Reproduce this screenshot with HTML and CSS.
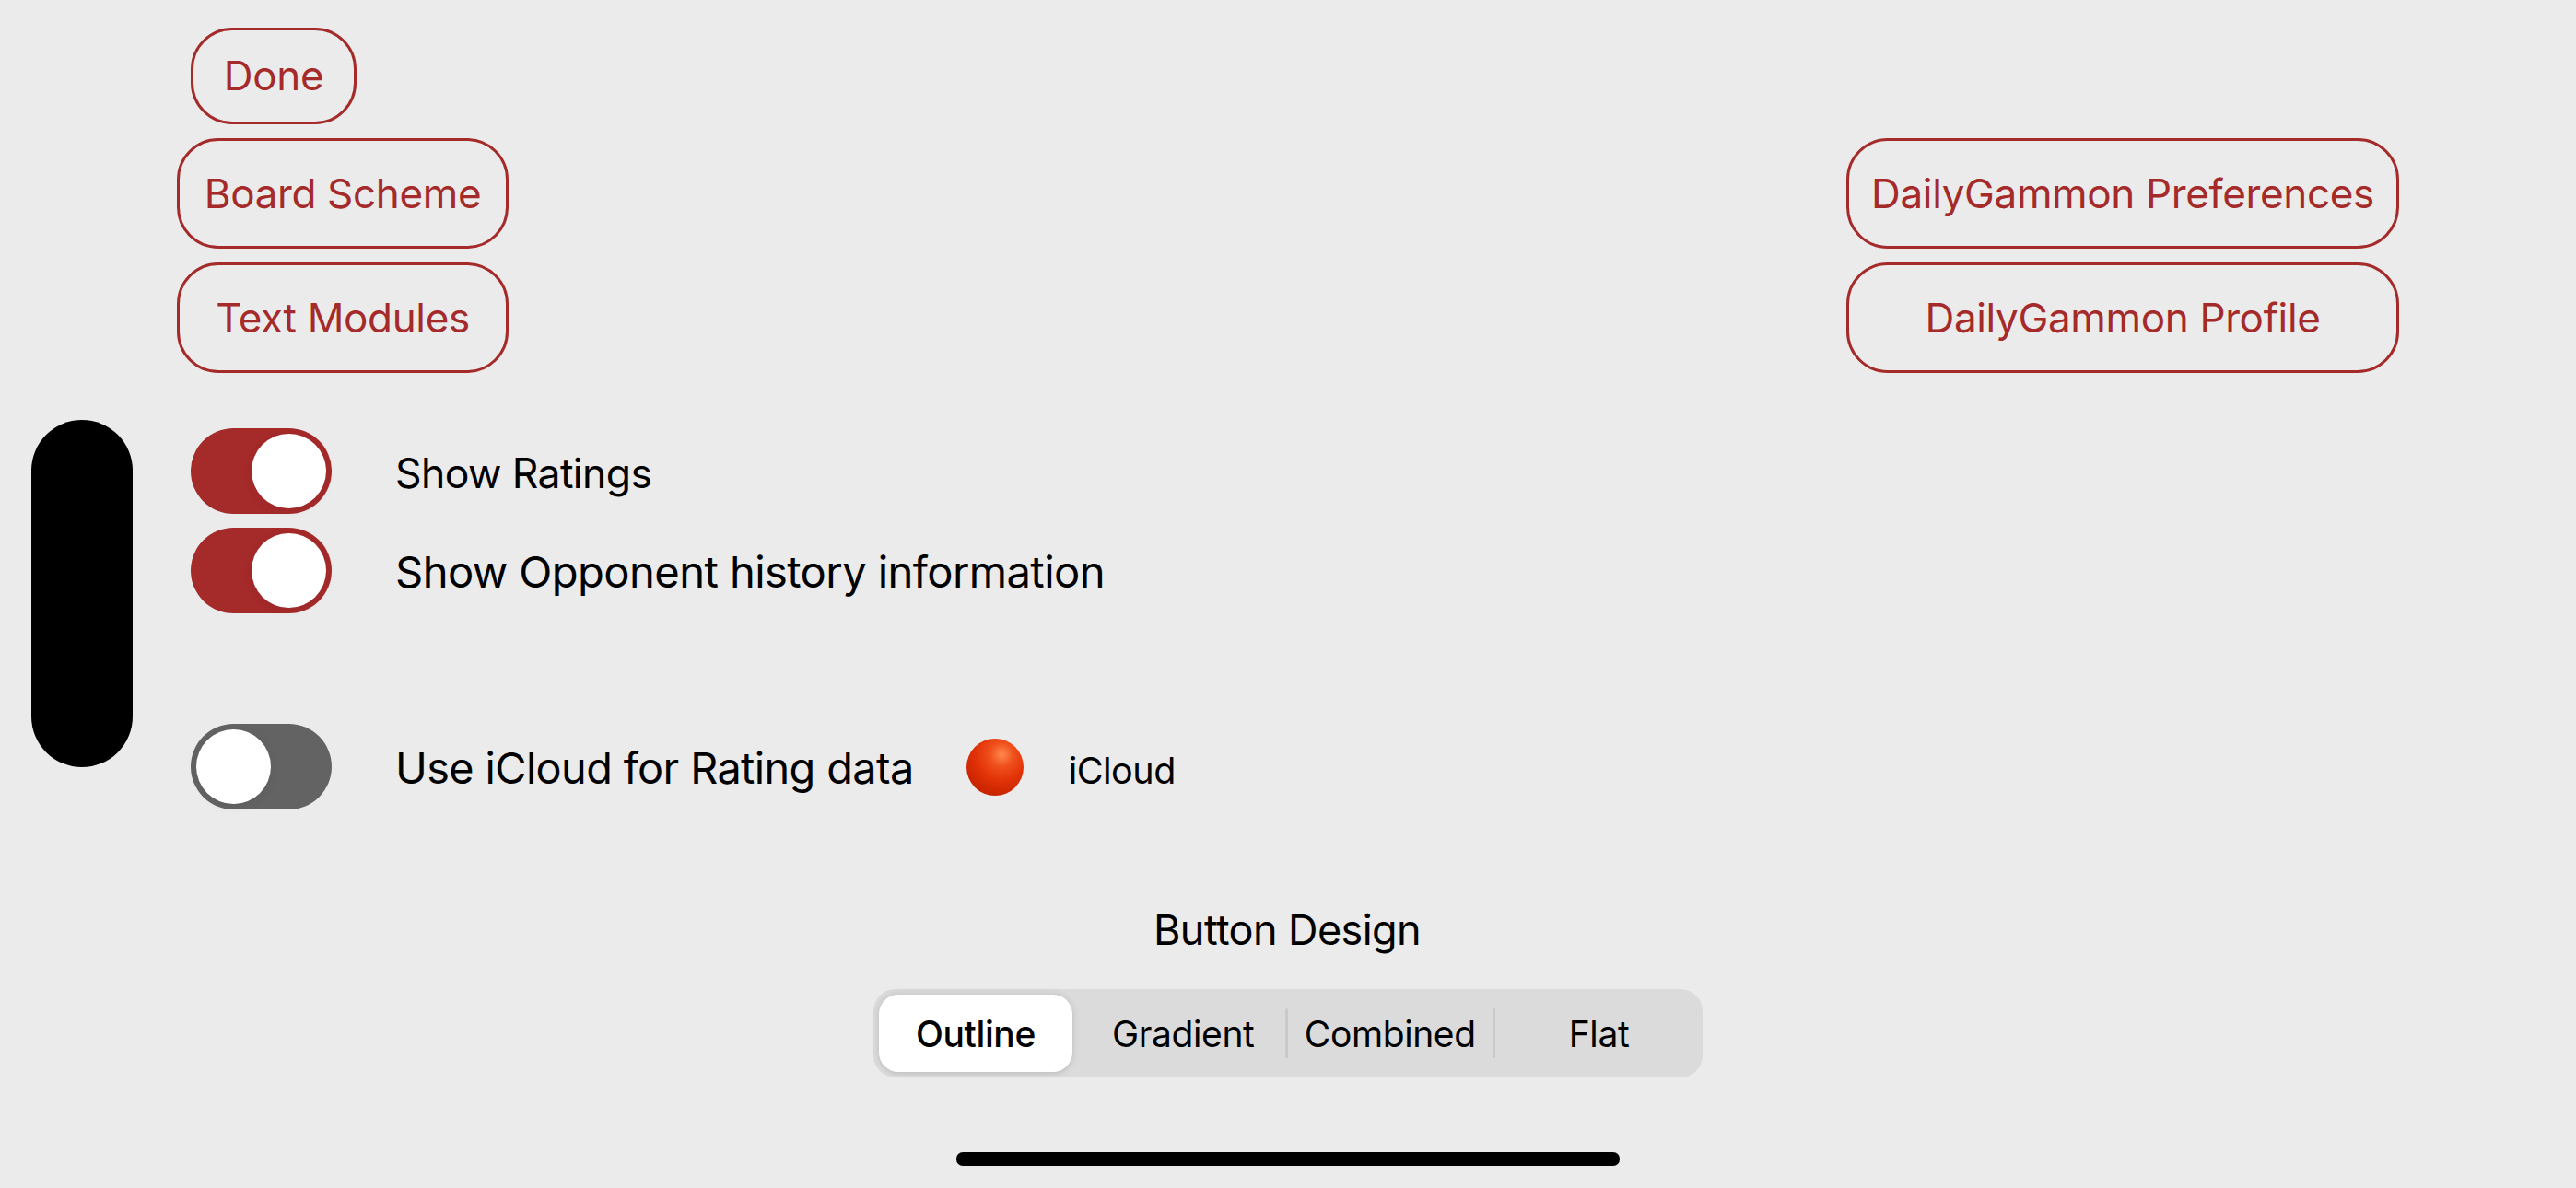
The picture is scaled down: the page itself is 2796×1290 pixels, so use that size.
FILE: index.html
```html
<!DOCTYPE html>
<html lang="en">
<head>
<meta charset="utf-8">
<title>Settings</title>
<link rel="stylesheet" href="styles.css">
</head>
<body>
<main class="page">
  <div class="pill"></div>
  <div class="done-row"><button class="btn btn-done">Done</button></div>
  <div class="btn-columns">
    <div class="btn-col btn-col-left">
      <button class="btn">Board Scheme</button>
      <button class="btn">Text Modules</button>
    </div>
    <div class="btn-col btn-col-right">
      <button class="btn">DailyGammon Preferences</button>
      <button class="btn">DailyGammon Profile</button>
    </div>
  </div>
  <section class="toggles">
    <div class="row"><span class="switch on"><span class="knob"></span></span><span class="label label-sm">Show Ratings</span></div>
    <div class="row"><span class="switch on"><span class="knob"></span></span><span class="label label-xl">Show Opponent history information</span></div>
    <div class="row row-icloud">
      <span class="switch off"><span class="knob"></span></span><span class="label label-lg">Use iCloud for Rating data</span>
      <span class="ball"></span><span class="small-label">iCloud</span>
    </div>
  </section>
  <section class="design">
    <div class="design-title">Button Design</div>
    <div class="segments">
      <div class="seg seg-selected"><span>Outline</span></div>
      <div class="seg"><span>Gradient</span></div>
      <div class="seg seg-sep"><span>Combined</span></div>
      <div class="seg seg-sep seg-last"><span>Flat</span></div>
    </div>
  </section>
  <div class="home-bar"></div>
</main>
</body>
</html>
```
FILE: styles.css
```css
* { box-sizing: border-box; }
html, body { margin: 0; padding: 0; }
body { background: #ebebeb; font-family: Inter, "Liberation Sans", sans-serif; color: #000; overflow: hidden; }
.page { position: relative; width: 2796px; height: 1290px; padding-top: 30px; }
.pill { position: absolute; left: 34px; top: 456px; width: 110px; height: 377px; border-radius: 55px; background: #000; }
.home-bar { position: absolute; left: 1038px; top: 1251px; width: 720px; height: 15px; border-radius: 7px; background: #000; }
.btn { display: flex; align-items: center; justify-content: center; padding: 0; background: transparent; border: 3px solid #a52a2a; border-radius: 45px; color: #a52a2a; font: 400 44px/1 Inter, "Liberation Sans", sans-serif; letter-spacing: -0.35px; }
.done-row { padding-left: 207px; }
.btn-done { width: 180px; height: 105px; padding-bottom: 2px; }
.btn-columns { display: flex; justify-content: space-between; margin-top: 15px; padding: 0 192px; }
.btn-col { display: flex; flex-direction: column; gap: 15px; }
.btn-col .btn { height: 120px; }
.btn-col-left { width: 360px; }
.btn-col-right { width: 600px; }
.toggles { display: flex; flex-direction: column; gap: 15px; margin-top: 60px; padding-left: 207px; }
.row { display: flex; align-items: center; height: 93px; }
.row-icloud { margin-top: 105px; }
.switch { position: relative; flex: none; display: block; width: 153px; height: 93px; border-radius: 47px; }
.switch.on { background: #a52a2a; }
.switch.off { background: #636363; }
.knob { position: absolute; top: 6px; width: 81px; height: 81px; border-radius: 50%; background: #fff; box-shadow: 0 3px 12px rgba(0,0,0,.06); }
.on .knob { right: 6px; }
.off .knob { left: 6px; }
.label { margin-left: 69px; padding-top: 3px; line-height: 56px; letter-spacing: -0.6px; white-space: nowrap; }
.label-sm { padding-top: 5px; font-size: 44.5px; }
.label-lg { font-size: 46.8px; }
.label-xl { font-size: 47.15px; }
.ball { flex: none; width: 62px; height: 62px; margin-left: 57px; border-radius: 50%; background: radial-gradient(circle at 62% 28%, #ff8a50 0, #f0501c 22%, #e23208 48%, #c92400 75%, #a82a14 100%); }
.small-label { margin-left: 49px; padding-top: 8px; font-size: 39.5px; line-height: 48px; letter-spacing: -0.5px; }
.design { display: flex; flex-direction: column; align-items: center; margin-top: 103px; }
.design-title { padding-right: 2px; font-size: 45px; line-height: 56px; letter-spacing: -0.6px; }
.segments { display: grid; grid-template-columns: 224px 224.5px 224.5px 227px; width: 900px; height: 96px; margin-top: 36px; border-radius: 24px; background: #dbdbdb; }
.seg { position: relative; display: flex; align-items: center; justify-content: center; font-size: 39px; letter-spacing: -0.4px; white-space: nowrap; }
.seg span { position: relative; }
.seg-last { padding-left: 2px; }
.seg-selected { padding-right: 2px; font-weight: 500; }
.seg-selected::before { content: ""; position: absolute; left: 6px; top: 6px; bottom: 6px; width: 210px; border-radius: 21px; background: #fff; box-shadow: 0 0 8px rgba(0,0,0,.12), 0 3px 3px rgba(0,0,0,.04); }
.seg-sep::before { content: ""; position: absolute; left: -1.5px; top: 21px; height: 54px; width: 3px; border-radius: 2px; background: #c9c9c9; }
```
